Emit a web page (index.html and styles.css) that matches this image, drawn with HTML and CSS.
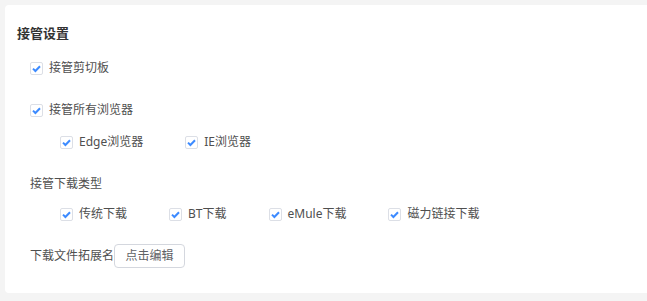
FILE: index.html
```html
<!DOCTYPE html>
<html lang="zh-CN">
<head>
<meta charset="utf-8">
<title>接管设置</title>
<link rel="stylesheet" href="styles.css">
</head>
<body>
<div class="card">
  <div class="title">接管设置</div>

  <div class="row row-first indent-1">
    <label class="cb"><span class="box"><svg viewBox="0 0 13 13"><path d="M3 6.6 L5.4 9 L10 4.2"/></svg></span><span class="lbl">接管剪切板</span></label>
  </div>

  <div class="row row-browsers indent-1">
    <label class="cb"><span class="box"><svg viewBox="0 0 13 13"><path d="M3 6.6 L5.4 9 L10 4.2"/></svg></span><span class="lbl">接管所有浏览器</span></label>
  </div>

  <div class="row row-sub indent-2 group">
    <label class="cb"><span class="box"><svg viewBox="0 0 13 13"><path d="M3 6.6 L5.4 9 L10 4.2"/></svg></span><span class="lbl">Edge浏览器</span></label>
    <label class="cb"><span class="box"><svg viewBox="0 0 13 13"><path d="M3 6.6 L5.4 9 L10 4.2"/></svg></span><span class="lbl">IE浏览器</span></label>
  </div>

  <div class="row row-section indent-1 text">接管下载类型</div>

  <div class="row row-sub2 indent-2 group">
    <label class="cb"><span class="box"><svg viewBox="0 0 13 13"><path d="M3 6.6 L5.4 9 L10 4.2"/></svg></span><span class="lbl">传统下载</span></label>
    <label class="cb"><span class="box"><svg viewBox="0 0 13 13"><path d="M3 6.6 L5.4 9 L10 4.2"/></svg></span><span class="lbl">BT下载</span></label>
    <label class="cb"><span class="box"><svg viewBox="0 0 13 13"><path d="M3 6.6 L5.4 9 L10 4.2"/></svg></span><span class="lbl">eMule下载</span></label>
    <label class="cb"><span class="box"><svg viewBox="0 0 13 13"><path d="M3 6.6 L5.4 9 L10 4.2"/></svg></span><span class="lbl">磁力链接下载</span></label>
  </div>

  <div class="row row-ext indent-1 text">
    <span>下载文件拓展名</span><button class="btn" type="button">点击编辑</button>
  </div>
</div>
</body>
</html>
```

FILE: styles.css
```css
html, body {
  margin: 0;
  padding: 0;
}
body {
  background: #f4f4f4;
  font-family: "Noto Sans", "Noto Sans CJK SC", sans-serif;
  color: #4f4f4f;
  font-size: 12px;
  padding: 5px 0 8px 5px;
}
.card {
  background: #fff;
  border-radius: 4px 0 0 4px;
  height: 288px;
  box-sizing: border-box;
  padding: 18px 12px 0 12px;
  display: flex;
  flex-direction: column;
}
.title {
  font-size: 13px;
  font-weight: 700;
  color: #333;
  line-height: 20px;
  height: 20px;
}
.row {
  display: flex;
  align-items: center;
  height: 20px;
  line-height: 20px;
}
.indent-1 { padding-left: 13px; }
.indent-2 { padding-left: 43px; }
.row-first { margin-top: 15px; }
.row-browsers { margin-top: 22px; }
.row-sub { margin-top: 12px; }
.row-section { margin-top: 22px; }
.row-sub2 { margin-top: 10px; }
.row-ext { margin-top: 20px; height: 24px; }
.group { gap: 42px; }
.cb {
  display: inline-flex;
  align-items: center;
  gap: 6px;
  cursor: pointer;
}
.box {
  width: 13px;
  height: 13px;
  box-sizing: border-box;
  border: 1px solid #dcdfe6;
  border-radius: 2px;
  background: #fff;
  display: inline-flex;
  align-items: center;
  justify-content: center;
}
.box svg {
  width: 13px;
  height: 13px;
  flex: none;
}
.box path {
  fill: none;
  stroke: #3d8bff;
  stroke-width: 2;
  stroke-linecap: butt;
  stroke-linejoin: miter;
}
.lbl {
  white-space: nowrap;
}
.btn {
  font-family: inherit;
  font-size: 12px;
  color: #606266;
  background: #fff;
  border: 1px solid #d4d7de;
  border-radius: 4px;
  height: 24px;
  width: 71px;
  padding: 0;
  line-height: 22px;
  cursor: pointer;
}
```
